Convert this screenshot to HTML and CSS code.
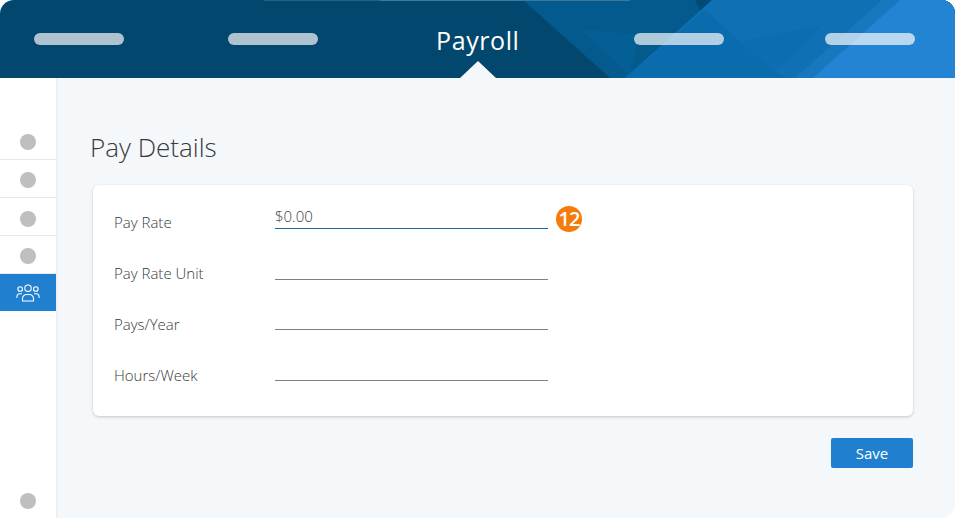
FILE: index.html
```html
<!DOCTYPE html>
<html lang="en">
<head>
<meta charset="utf-8">
<title>Payroll</title>
<link rel="stylesheet" href="styles.css">
</head>
<body>
<div class="app">
  <header class="topbar">
    <svg class="topbar-art" width="955" height="78" viewBox="0 0 955 78" aria-hidden="true">
      <polygon points="523,0 955,0 955,78 610,78" fill="#045a8c"/>
      <polygon points="582,30 640,34 628,78 626,72" fill="#045f96"/>
      <polygon points="695,0 712,0 700,11" fill="#034a75"/>
      <polygon points="712,0 955,0 955,78 625,78" fill="#0f70b3"/>
      <polygon points="705,10 740,42 775,72 788,78 625,78" fill="#0a6bad"/>
      <polygon points="740,42 822,25 775,71" fill="#0d6daf"/>
      <polygon points="882,0 955,0 955,78 795,78" fill="#1877bf"/>
      <polygon points="900,0 955,0 955,78 813,78" fill="#2284d2"/>
      <rect x="264" y="0" width="116" height="1" fill="#285f82"/>
      <rect x="380" y="0" width="250" height="1" fill="#3a7a9c"/>
    </svg>
    <nav class="tabs">
      <span class="pill"></span>
      <span class="pill"></span>
      <span class="tab-current">Payroll</span>
      <span class="pill"></span>
      <span class="pill"></span>
    </nav>
    <span class="notch"></span>
  </header>
  <div class="body">
    <aside class="sidebar">
      <ul class="side-list">
        <li class="side-item"><span class="dot"></span></li>
        <li class="side-item"><span class="dot"></span></li>
        <li class="side-item side-item-low"><span class="dot"></span></li>
        <li class="side-item"><span class="dot"></span></li>
        <li class="side-item side-item-active">
          <svg width="24" height="18" viewBox="0 0 24 18" fill="none" stroke="#fff" stroke-width="1.1" stroke-linecap="round" stroke-linejoin="round">
            <circle cx="12" cy="4.2" r="3.2"/>
            <circle cx="4.2" cy="5" r="2.3"/>
            <circle cx="19.8" cy="5" r="2.3"/>
            <path d="M6.5 17v-2.5c0-2.2 2-4 4-4h3c2 0 4 1.800 4 4V17z"/>
            <path d="M.8 13.500c0-2.300 1.300-3.700 3.200-3.700h1.500"/>
            <path d="M23.200 13.500c0-2.300-1.300-3.700-3.200-3.700h-1.500"/>
          </svg>
        </li>
      </ul>
      <span class="dot dot-bottom"></span>
    </aside>
    <main class="content">
      <h1 class="title">Pay Details</h1>
      <section class="card">
        <div class="row">
          <span class="label">Pay Rate</span>
          <span class="field field-active">$0.00</span>
          <span class="badge">12</span>
        </div>
        <div class="row">
          <span class="label">Pay Rate Unit</span>
          <span class="field"></span>
        </div>
        <div class="row">
          <span class="label">Pays/Year</span>
          <span class="field field-short"></span>
        </div>
        <div class="row">
          <span class="label">Hours/Week</span>
          <span class="field field-short"></span>
        </div>
      </section>
      <div class="actions">
        <button class="save" type="button">Save</button>
      </div>
    </main>
  </div>
</div>
</body>
</html>
```
FILE: styles.css
```css
* { box-sizing: border-box; }
html, body { margin: 0; height: 100%; background: #fff; }
body { font-family: "Open Sans", "Liberation Sans", sans-serif; overflow: hidden; }
.app { width: 955px; height: 518px; display: flex; flex-direction: column; }

.topbar { position: relative; height: 78px; flex: none; background: #02476d; border-radius: 14px 14px 0 0; overflow: hidden; }
.topbar-art { position: absolute; left: 0; top: 0; }
.tabs { position: relative; height: 78px; display: flex; align-items: center; padding-left: 34px; }
.pill { width: 90px; height: 12px; margin-top: -1px; border-radius: 6px; background: rgba(255,255,255,.68); }
.pill:nth-child(2) { margin-left: 104px; }
.pill:nth-child(4) { margin-left: 115px; }
.pill:nth-child(5) { margin-left: 101px; }
.tab-current { width: 83px; margin-left: 118px; color: #fff; font-size: 25px; line-height: 34px; margin-top: 2px; letter-spacing: .6px; white-space: nowrap; }
.notch { position: absolute; left: 460px; bottom: 0; width: 0; height: 0; border-left: 18px solid transparent; border-right: 18px solid transparent; border-bottom: 17px solid #f4f8fb; }

.body { flex: 1; display: flex; min-height: 0; }
.sidebar { width: 58px; flex: none; background: #fff; border-right: 2px solid #eceff3; display: flex; flex-direction: column; padding-top: 44px; padding-bottom: 9px; }
.side-list { list-style: none; margin: 0; padding: 0; }
.side-item { height: 38px; display: flex; align-items: center; justify-content: center; padding-top: 2px; border-bottom: 1px solid #e8e8e8; }
.side-item-low { padding-top: 4px; }
.side-item:last-child { border-bottom: 0; padding-top: 0; }
.side-item-active { background: #2080cf; height: 37px; }
.dot { display: block; width: 16px; height: 16px; border-radius: 50%; background: #bfbfbf; }
.dot-bottom { margin: auto auto 0; }

.content { flex: 1; background: #f4f8fb; border-bottom-right-radius: 14px; padding: 51px 42px 0 35px; }
.title { margin: 0 0 20px -3px; font-size: 26px; font-weight: 300; line-height: 36px; color: #3a3a3a; }
.card { background: #fff; border-radius: 6px; box-shadow: 0 1px 3px rgba(0,0,0,.2); height: 231px; padding: 13px 21px 0; }
.row { display: flex; align-items: flex-start; height: 51px; position: relative; }
.label { width: 161px; font-size: 15px; font-weight: 300; line-height: 20px; color: #3a3a3a; padding-top: 14px; }
.field { display: block; width: 273px; height: 31px; border-bottom: 1px solid #808080; font-size: 15px; font-weight: 300; line-height: 20px; padding-top: 8px; color: #3a3a3a; }
.field-short { height: 30px; }
.field-active { border-bottom-color: #1d6a9c; }
.badge { width: 26px; height: 26px; margin: 8px 0 0 8px; border-radius: 50%; background: #f57c0a; color: #fff; font-size: 20px; font-weight: 600; line-height: 26px; text-align: center; letter-spacing: -1px; }
.actions { display: flex; justify-content: flex-end; margin-top: 22px; }
.save { width: 82px; height: 30px; border: 0; border-radius: 2px; background: #2080cf; color: #fff; font-family: inherit; font-size: 15px; padding: 0; }
```
